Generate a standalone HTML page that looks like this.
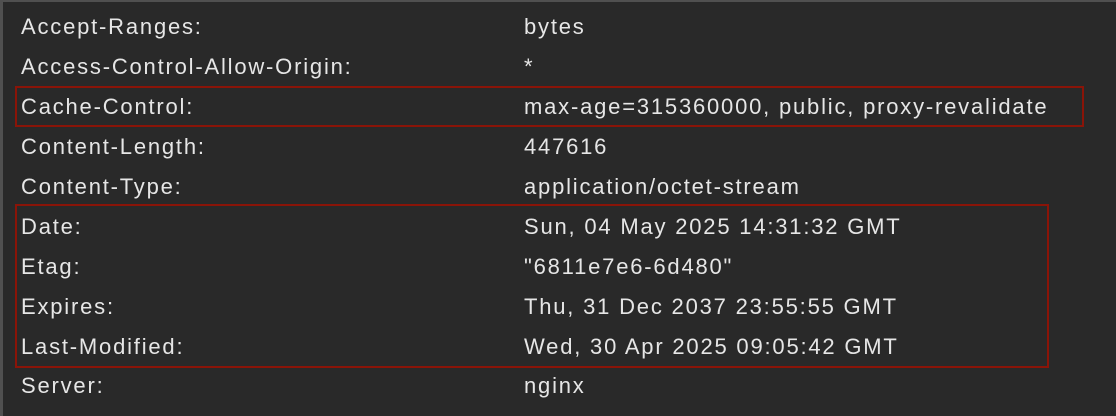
<!DOCTYPE html>
<html><head><style>
html,body{margin:0;padding:0;}
body{width:1116px;height:416px;background:#292929;position:relative;overflow:hidden;font-family:"Liberation Sans",sans-serif;font-size:22px;letter-spacing:1.8px;color:#e6e6e6;}
.top{position:absolute;left:0;top:0;width:1116px;height:2px;background:#505050;}
.left{position:absolute;left:0;top:0;width:3px;height:416px;background:#505050;}
.r{position:absolute;left:0;height:40px;line-height:40px;white-space:nowrap;}
.k{position:absolute;left:21px;}
.v{position:absolute;left:524px;}
.box{position:absolute;border:2px solid #8a1408;box-sizing:border-box;}
</style></head><body>
<div class="top"></div><div class="left"></div>
<div class="box" style="left:15px;top:86px;width:1069px;height:41px"></div>
<div class="box" style="left:15px;top:204px;width:1034px;height:164px"></div>
<div class="r" style="top:7px"><span class="k">Accept-Ranges:</span><span class="v">bytes</span></div>
<div class="r" style="top:47px"><span class="k">Access-Control-Allow-Origin:</span><span class="v">*</span></div>
<div class="r" style="top:87px"><span class="k">Cache-Control:</span><span class="v">max-age=315360000, public, proxy-revalidate</span></div>
<div class="r" style="top:127px"><span class="k">Content-Length:</span><span class="v">447616</span></div>
<div class="r" style="top:167px"><span class="k">Content-Type:</span><span class="v">application/octet-stream</span></div>
<div class="r" style="top:207px"><span class="k">Date:</span><span class="v">Sun, 04 May 2025 14:31:32 GMT</span></div>
<div class="r" style="top:247px"><span class="k">Etag:</span><span class="v">"6811e7e6-6d480"</span></div>
<div class="r" style="top:287px"><span class="k">Expires:</span><span class="v">Thu, 31 Dec 2037 23:55:55 GMT</span></div>
<div class="r" style="top:327px"><span class="k">Last-Modified:</span><span class="v">Wed, 30 Apr 2025 09:05:42 GMT</span></div>
<div class="r" style="top:366px"><span class="k">Server:</span><span class="v">nginx</span></div>
</body></html>
